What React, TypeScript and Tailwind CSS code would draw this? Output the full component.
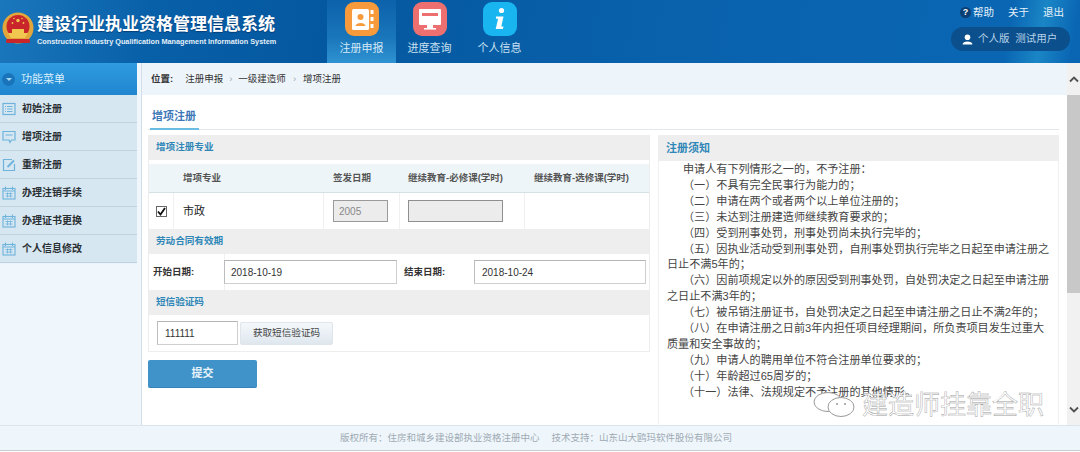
import React from "react";

const cjk = { fontFamily: '"Liberation Sans", "Noto Sans CJK SC", sans-serif' };

const Emblem = () => (
  <svg width="32" height="36" viewBox="0 0 32 36" className="shrink-0">
    <circle cx="16" cy="16" r="15.5" fill="#e2a63a" />
    <circle cx="16" cy="14.5" r="11.5" fill="#c8262a" />
    <path d="M6 21 h20 l-3 5 H9 z" fill="#f1c74f" />
    <path d="M10 21 v-4 h12 v4z" fill="#f1c74f" />
    <path d="M12 17 l4-3 4 3z" fill="#c8262a" />
    <circle cx="16" cy="8.5" r="1.7" fill="#f1c74f" />
    <circle cx="10.5" cy="11" r="0.9" fill="#f1c74f" />
    <circle cx="21.5" cy="11" r="0.9" fill="#f1c74f" />
    <circle cx="12" cy="6.5" r="0.8" fill="#f1c74f" />
    <circle cx="20" cy="6.5" r="0.8" fill="#f1c74f" />
    <rect x="4" y="27" width="24" height="4" rx="1.5" fill="#c8262a" />
  </svg>
);

const NavIcon1 = () => (
  <svg width="34" height="34" viewBox="0 0 34 34">
    <rect width="34" height="34" rx="9" fill="#f79a3b" />
    <rect x="7" y="7" width="17" height="21" rx="1.5" fill="#fff" />
    <circle cx="15.5" cy="15" r="3" fill="#f79a3b" />
    <path d="M10.5 24 c0.5-4 9.5-4 10 0z" fill="#f79a3b" />
    <rect x="25.5" y="8" width="3" height="4" fill="#fff" />
    <rect x="25.5" y="15" width="3" height="4" fill="#fff" />
    <rect x="25.5" y="22" width="3" height="4" fill="#fff" />
  </svg>
);

const NavIcon2 = () => (
  <svg width="34" height="34" viewBox="0 0 34 34">
    <rect width="34" height="34" rx="9" fill="#ee6f70" />
    <rect x="6" y="7" width="22" height="16" rx="1" fill="#fff" />
    <rect x="9" y="11" width="16" height="3" fill="#ee6f70" />
    <rect x="14" y="23" width="6" height="3" fill="#fff" />
    <rect x="11" y="26" width="12" height="1.6" fill="#fff" />
  </svg>
);

const NavIcon3 = () => (
  <svg width="34" height="34" viewBox="0 0 34 34">
    <rect width="34" height="34" rx="9" fill="#19b5f1" />
    <circle cx="18.5" cy="8.5" r="2.6" fill="#fff" />
    <path d="M13 14.5 h7.5 l-2.2 10 h2.2 l-0.6 2.5 h-7.2 l2.4-10.2 h-2.2z" fill="#fff" />
  </svg>
);

const SideIcon = ({ kind }: { kind: string }) => {
  const c = "#6db3db";
  if (kind === "list")
    return (
      <svg width="14" height="14" viewBox="0 0 14 14" fill="none" stroke={c}>
        <rect x="1" y="1.5" width="12" height="11" strokeWidth="1.2" />
        <path d="M5 4.5h5.5M5 7h5.5M5 9.5h5.5M3 4.5h1M3 7h1M3 9.5h1" />
      </svg>
    );
  if (kind === "chat")
    return (
      <svg width="14" height="14" viewBox="0 0 14 14" fill="none" stroke={c}>
        <path d="M1 1.5h12v8.5H9.5L8 12.5 7 10H1z" strokeWidth="1.2" />
        <path d="M3.5 5h7" />
      </svg>
    );
  if (kind === "edit")
    return (
      <svg width="14" height="14" viewBox="0 0 14 14" fill="none" stroke={c}>
        <path d="M10 1.5H1.5v11h11V6" strokeWidth="1.2" />
        <path d="M5.5 9 L12 2.5" strokeWidth="2" />
      </svg>
    );
  return (
    <svg width="14" height="14" viewBox="0 0 14 14" fill="none" stroke={c}>
      <rect x="1" y="2.5" width="12" height="10.5" strokeWidth="1.1" />
      <path d="M3.5 0.5v3.5M10.5 0.5v3.5" />
      <path d="M1 5h12" />
      <path d="M3.5 7.5h7M3.5 10h7M5.5 6.5v5M8.5 6.5v5" strokeWidth="0.8" />
    </svg>
  );
};

const menu = [
  { icon: "list", label: "初始注册" },
  { icon: "chat", label: "增项注册" },
  { icon: "edit", label: "重新注册" },
  { icon: "cal", label: "办理注销手续" },
  { icon: "cal", label: "办理证书更换" },
  { icon: "cal", label: "个人信息修改" },
];

const notes = [
  "申请人有下列情形之一的，不予注册：",
  "（一）不具有完全民事行为能力的；",
  "（二）申请在两个或者两个以上单位注册的；",
  "（三）未达到注册建造师继续教育要求的；",
  "（四）受到刑事处罚，刑事处罚尚未执行完毕的；",
  "（五）因执业活动受到刑事处罚，自刑事处罚执行完毕之日起至申请注册之日止不满5年的；",
  "（六）因前项规定以外的原因受到刑事处罚，自处罚决定之日起至申请注册之日止不满3年的；",
  "（七）被吊销注册证书，自处罚决定之日起至申请注册之日止不满2年的；",
  "（八）在申请注册之日前3年内担任项目经理期间，所负责项目发生过重大质量和安全事故的；",
  "（九）申请人的聘用单位不符合注册单位要求的；",
  "（十）年龄超过65周岁的；",
  "（十一）法律、法规规定不予注册的其他情形。",
];

const SectionTitle = ({ children }: { children: React.ReactNode }) => (
  <div className="h-[25px] flex items-center pl-[7px] bg-[#eeeeee] text-[9.6px] font-bold text-[#2f87b8]">
    {children}
  </div>
);

const Input = ({ value, className }: { value: string; className: string }) => (
  <div className={`flex items-center bg-white border border-[#cfcfcf] border-t-[#b5b5b5] border-l-[#bdbdbd] text-[10px] text-[#333] ${className}`}>
    {value}
  </div>
);

export default function App() {
  return (
    <div className="w-[1080px] h-[452px] flex flex-col overflow-hidden bg-white" style={cjk}>
      {/* header */}
      <header className="h-[63px] shrink-0 flex justify-between bg-[linear-gradient(100deg,#1b77bb_0%,#0860a9_14%,#04589f_30%,#0a62ad_65%,#0a66b3_93%,#1a86c6_96%,#0a66b3_99%)]">
        <div className="flex">
          <div className="w-[327px] flex items-start pt-[12px] pl-[2px] gap-[3px]">
            <Emblem />
            <div className="pt-[3px]">
              <div className="text-[17px] leading-[20px] font-bold text-white whitespace-nowrap [text-shadow:0_1px_1px_rgba(0,40,90,0.6)]">
                建设行业执业资格管理信息系统
              </div>
              <div className="mt-[2px] text-[7.3px] leading-[10px] font-bold text-[#e3eff8] whitespace-nowrap">
                Construction Industry Qualification Management Information System
              </div>
            </div>
          </div>
          <nav className="flex">
            <div className="w-[69px] flex flex-col items-center pt-[2px] bg-[linear-gradient(180deg,#0c62ab_0%,#1a76ba_60%,#2f93d3_100%)]">
              <NavIcon1 />
              <span className="mt-[5px] text-[11px] leading-[14px] text-[#d5e9f6]">注册申报</span>
            </div>
            <div className="w-[67px] flex flex-col items-center pt-[2px]">
              <NavIcon2 />
              <span className="mt-[5px] text-[11px] leading-[14px] text-[#c9e0f1]">进度查询</span>
            </div>
            <div className="w-[73px] flex flex-col items-center pt-[2px]">
              <NavIcon3 />
              <span className="mt-[5px] text-[11px] leading-[14px] text-[#c9e0f1]">个人信息</span>
            </div>
          </nav>
        </div>
        <div className="w-[130px] mr-[10px] flex flex-col items-end pt-[5px]">
          <div className="h-[15px] flex items-center text-[10.5px] text-[#e6f1f9] pr-[6px]">
            <span className="w-[11px] h-[11px] rounded-full bg-[#0b3f73] flex items-center justify-center text-[9px] font-bold text-white mr-[2px]">?</span>
            <span>帮助</span>
            <span className="ml-[14px]">关于</span>
            <span className="ml-[14px]">退出</span>
          </div>
          <div className="mt-[7px] w-[119px] h-[24px] rounded-full bg-[#0b4f8c] flex items-center pl-[11px] text-[10.5px] text-[#b7d2e8] whitespace-nowrap">
            <svg width="11" height="11" viewBox="0 0 11 11" className="mr-[5px]" fill="#fff">
              <circle cx="5.5" cy="3.2" r="2.8" />
              <path d="M0.5 10.5 c0-4 10-4 10 0z" />
            </svg>
            个人版&nbsp;&nbsp;测试用户
          </div>
        </div>
      </header>

      <div className="flex-1 flex min-h-0">
        {/* sidebar */}
        <aside className="w-[142px] shrink-0 bg-[#eff7fc] border-r border-[#d3dfe8] flex">
          <div className="w-[137px]">
            <div className="h-[32px] flex items-center pl-[2px] bg-[linear-gradient(180deg,#2f9be0_0%,#1f86cf_100%)]">
              <span className="w-[13px] h-[13px] rounded-full bg-[#1a74bb] flex items-center justify-center">
                <span className="border-x-[3px] border-x-transparent border-t-[3px] border-t-[#a9d8f5]" />
              </span>
              <span className="ml-[6px] text-[11px] text-[#d8eefb]">功能菜单</span>
            </div>
            {menu.map((m) => (
              <div key={m.label} className="h-[28px] flex items-center pl-[2px] bg-[#d6e7f2] border-b border-[#bfd2df] shadow-[0_1px_0_#eaf3f9]">
                <SideIcon kind={m.icon} />
                <span className="ml-[6px] text-[10px] font-bold text-[#2a2f33]">{m.label}</span>
              </div>
            ))}
          </div>
        </aside>

        {/* main */}
        <main className="flex-1 flex flex-col min-w-0">
          <div className="h-[32px] shrink-0 flex items-center pl-[9px] bg-[#eef5fa] text-[9.5px] text-[#333]">
            <span className="font-bold mr-[12px]">位置:</span>
            <span>注册申报</span>
            <span className="mx-[6px] text-[#9aa]">›</span>
            <span>一级建造师</span>
            <span className="mx-[7px] text-[#9aa]">›</span>
            <span>增项注册</span>
          </div>

          <div className="flex-1 relative px-[6px] pt-[3px] min-h-0">
            <div className="mr-[2px] h-[32px] flex items-end border-b border-[#e3e8ec]">
              <div className="ml-[2px] w-[49px] h-[24px] pl-[2px] text-[11px] leading-[20px] font-bold text-[#3c77b8] border-b-[2px] border-[#69bde3] -mb-px">
                增项注册
              </div>
            </div>

            <div className="flex mt-[5px] gap-[8px]">
              {/* left form */}
              <div className="w-[502px] shrink-0">
                <div className="border border-t-0 border-[#ededed]">
                  <SectionTitle>增项注册专业</SectionTitle>
                  <div className="h-[4px]" />
                  <div className="h-[29px] flex items-center bg-[#eef5f9] border-b border-[#d5dfe6] text-[9.5px] font-bold text-[#555]">
                    <span className="w-[25px]" />
                    <span className="w-[150px] pl-[9px]">增项专业</span>
                    <span className="w-[76px] pl-[9px]">签发日期</span>
                    <span className="w-[125px] pl-[8px] whitespace-nowrap">继续教育-必修课(学时)</span>
                    <span className="flex-1 pl-[9px] whitespace-nowrap">继续教育-选修课(学时)</span>
                  </div>
                  <div className="h-[36px] flex items-center">
                    <div className="w-[25px] h-full flex items-center justify-center border-r border-[#f0f0f0]">
                      <span className="w-[11px] h-[11px] border border-[#666] bg-white flex items-center justify-center">
                        <svg width="9" height="9" viewBox="0 0 9 9" fill="none" stroke="#111" strokeWidth="1.8">
                          <path d="M1 4.5 L3.5 7.5 L8 1" />
                        </svg>
                      </span>
                    </div>
                    <div className="w-[150px] h-full flex items-center pl-[9px] text-[11px] text-[#222] border-r border-[#f0f0f0]">市政</div>
                    <div className="w-[76px] h-full flex items-center pl-[9px] border-r border-[#f0f0f0]">
                      <Input value="2005" className="w-[55px] h-[22px] pl-[5px] !bg-[#ececec] !text-[#888] !border-[#9a9a9a]" />
                    </div>
                    <div className="w-[125px] h-full flex items-center pl-[8px] border-r border-[#f0f0f0]">
                      <Input value="" className="w-[95px] h-[22px] !bg-[#ececec] !border-[#8f8f8f]" />
                    </div>
                  </div>
                  <SectionTitle>劳动合同有效期</SectionTitle>
                  <div className="h-[36px] flex items-center text-[9.5px] font-bold text-[#333]">
                    <span className="w-[76px] pl-[4px] border-r border-[#f0f0f0] h-full flex items-center">开始日期:</span>
                    <Input value="2018-10-19" className="ml-[-1px] w-[173px] h-[24px] pl-[6px] !font-normal" />
                    <span className="w-[72px] ml-[5px] pl-[2px]">结束日期:</span>
                    <Input value="2018-10-24" className="w-[172px] h-[24px] pl-[7px] !font-normal" />
                  </div>
                  <SectionTitle>短信验证码</SectionTitle>
                  <div className="h-[36px] flex items-center pl-[8px]">
                    <Input value="111111" className="w-[81px] h-[24px] pl-[7px]" />
                    <button className="ml-[2px] w-[93px] h-[23px] rounded-[2px] bg-[linear-gradient(180deg,#f4f8fb_0%,#dfe7ee_100%)] text-[9.6px] text-[#444] border border-[#dfe5ea]">
                      获取短信验证码
                    </button>
                  </div>
                </div>
                <button className="mt-[8px] w-[109px] h-[28px] rounded-[2px] bg-[#3f93c8] border-b border-[#3384b8] text-[11px] font-bold text-[#e9f4fb]">
                  提交
                </button>
              </div>

              {/* notice */}
              <div className="w-[401px] h-[291px] overflow-hidden">
                <div className="h-[26px] flex items-center pl-[8px] bg-[#eeeeee] text-[11px] font-bold text-[#2f87b8]">注册须知</div>
                <div className="h-full pl-[8px] pr-[5px] pt-[1px] border-x border-[#f0f0f0] text-[11.1px] leading-[15.9px] text-[#444]">
                  {notes.map((n) => (
                    <p key={n} className="indent-[16px]">{n}</p>
                  ))}
                </div>
              </div>
            </div>

            {/* watermark */}
            <div className="absolute left-[670px] top-[295px] flex items-center gap-[6px]">
              <svg width="44" height="28" viewBox="0 0 44 28" fill="#fff" stroke="#999" strokeWidth="1">
                <ellipse cx="16" cy="11" rx="14" ry="9.5" />
                <ellipse cx="29" cy="16" rx="13" ry="9.5" />
                <circle cx="25" cy="13" r="1" fill="#999" stroke="none" />
                <circle cx="33" cy="13" r="1" fill="#999" stroke="none" />
              </svg>
              <span className="text-[26px] leading-[30px] text-white whitespace-nowrap [-webkit-text-stroke:0.4px_#999]">
                建造师挂靠全职
              </span>
            </div>
          </div>
        </main>

        {/* page scrollbar */}
        <div className="w-[13px] shrink-0 flex flex-col bg-[#f1f1f1]">
          <div className="h-[32px] flex items-center justify-center">
            <svg width="10" height="7" viewBox="0 0 10 7" fill="none" stroke="#505050" strokeWidth="1.8">
              <path d="M1 5.5 L5 1.5 L9 5.5" />
            </svg>
          </div>
          <div className="h-[198px] bg-[#c8c8c8]" />
          <div className="flex-1" />
          <div className="h-[32px] flex items-center justify-center">
            <svg width="10" height="7" viewBox="0 0 10 7" fill="none" stroke="#505050" strokeWidth="1.8">
              <path d="M1 1.5 L5 5.5 L9 1.5" />
            </svg>
          </div>
        </div>
      </div>

      {/* footer */}
      <footer className="h-[26px] shrink-0 flex items-center pl-[340px] bg-[#eef6fb] border-t border-[#dde5ea] border-b border-b-[#c6ced4] text-[9.5px] text-[#a0aab3] whitespace-nowrap">
        <span>版权所有：住房和城乡建设部执业资格注册中心</span>
        <span className="ml-[12px]">技术支持：山东山大鸥玛软件股份有限公司</span>
      </footer>
      <div className="h-px shrink-0 bg-white" />
    </div>
  );
}
